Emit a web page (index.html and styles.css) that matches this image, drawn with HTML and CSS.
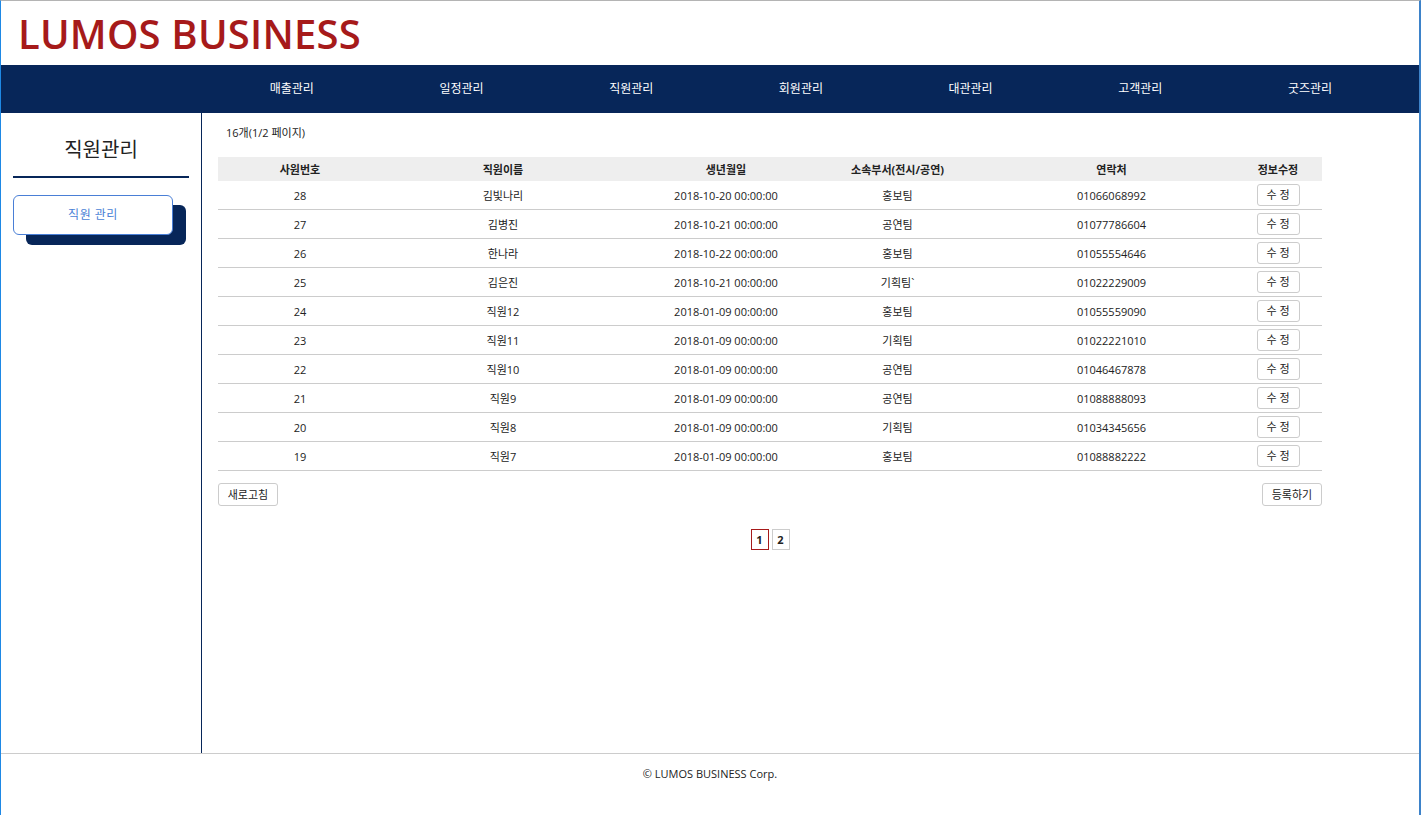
FILE: index.html
```html
<!DOCTYPE html>
<html lang="ko">
<head>
<meta charset="utf-8">
<title>LUMOS BUSINESS - 직원관리</title>
<link rel="stylesheet" href="styles.css">
</head>
<body>
<div class="page">
  <header class="header">
    <h1 class="logo">LUMOS BUSINESS</h1>
  </header>
  <nav class="nav">
    <ul class="nav-list">
      <li>매출관리</li>
      <li>일정관리</li>
      <li>직원관리</li>
      <li>회원관리</li>
      <li>대관관리</li>
      <li>고객관리</li>
      <li>굿즈관리</li>
    </ul>
  </nav>
  <div class="body">
    <aside class="side">
      <h2 class="side-title">직원관리</h2>
      <div class="side-btn">직원 관리</div>
    </aside>
    <main class="main">
      <p class="count">16개(1/2 페이지)</p>
      <table class="tbl">
        <thead>
          <tr><th class="c1">사원번호</th><th class="c2">직원이름</th><th class="c3">생년월일</th><th class="c4">소속부서(전시/공연)</th><th class="c5">연락처</th><th class="c6">정보수정</th></tr>
        </thead>
        <tbody>
          <tr><td>28</td><td>김빛나리</td><td>2018-10-20 00:00:00</td><td>홍보팀</td><td class="c5">01066068992</td><td><span class="edit">수 정</span></td></tr>
          <tr><td>27</td><td>김병진</td><td>2018-10-21 00:00:00</td><td>공연팀</td><td class="c5">01077786604</td><td><span class="edit">수 정</span></td></tr>
          <tr><td>26</td><td>한나라</td><td>2018-10-22 00:00:00</td><td>홍보팀</td><td class="c5">01055554646</td><td><span class="edit">수 정</span></td></tr>
          <tr><td>25</td><td>김은진</td><td>2018-10-21 00:00:00</td><td>기획팀`</td><td class="c5">01022229009</td><td><span class="edit">수 정</span></td></tr>
          <tr><td>24</td><td>직원12</td><td>2018-01-09 00:00:00</td><td>홍보팀</td><td class="c5">01055559090</td><td><span class="edit">수 정</span></td></tr>
          <tr><td>23</td><td>직원11</td><td>2018-01-09 00:00:00</td><td>기획팀</td><td class="c5">01022221010</td><td><span class="edit">수 정</span></td></tr>
          <tr><td>22</td><td>직원10</td><td>2018-01-09 00:00:00</td><td>공연팀</td><td class="c5">01046467878</td><td><span class="edit">수 정</span></td></tr>
          <tr><td>21</td><td>직원9</td><td>2018-01-09 00:00:00</td><td>공연팀</td><td class="c5">01088888093</td><td><span class="edit">수 정</span></td></tr>
          <tr><td>20</td><td>직원8</td><td>2018-01-09 00:00:00</td><td>기획팀</td><td class="c5">01034345656</td><td><span class="edit">수 정</span></td></tr>
          <tr><td>19</td><td>직원7</td><td>2018-01-09 00:00:00</td><td>홍보팀</td><td class="c5">01088882222</td><td><span class="edit">수 정</span></td></tr>
        </tbody>
      </table>
      <div class="actions">
        <span class="btn">새로고침</span>
        <span class="btn">등록하기</span>
      </div>
      <div class="pager">
        <span class="pg active">1</span>
        <span class="pg">2</span>
      </div>
    </main>
  </div>
  <footer class="footer">© LUMOS BUSINESS Corp.</footer>
</div>
</body>
</html>
```
FILE: styles.css
```css
html, body {
  margin: 0;
  padding: 0;
  background: #fff;
}
body {
  font-family: "Open Sans", "Noto Sans CJK KR", sans-serif;
  color: #222;
  font-size: 11px;
}
.page {
  height: 815px;
  box-sizing: border-box;
  border-top: 1px solid #b4b4b4;
  border-left: 1px solid #1e88e5;
  border-right: 2px solid #3d82c9;
  display: flex;
  flex-direction: column;
}
.header {
  height: 64px;
  display: flex;
  align-items: center;
  padding-left: 17px;
}
.logo {
  margin: 0;
  color: #a61a1a;
  font-family: "Open Sans", "Noto Sans CJK KR", sans-serif;
  font-weight: 600;
  font-size: 40px;
  letter-spacing: 0.2px;
  line-height: 1;
  padding-top: 2px;
}
.nav {
  height: 48px;
  background: #072659;
}
.nav-list {
  list-style: none;
  margin: 0;
  padding: 0 0 0 206px;
  display: flex;
  height: 100%;
}
.nav-list li {
  width: 169.7px;
  text-align: center;
  color: #fff;
  font-size: 12px;
  line-height: 48px;
}
.body {
  display: flex;
  height: 640px;
}
.side {
  border-right: 1px solid #072659;
  padding: 0 12px;
  box-sizing: border-box;
  width: 201px;
}
.side-title {
  margin: 0;
  padding-top: 22px;
  height: 41px;
  border-bottom: 2px solid #072659;
  text-align: center;
  font-weight: 400;
  font-size: 20px;
  line-height: 30px;
  color: #222;
}
.side-btn {
  margin-top: 17px;
  width: 160px;
  height: 40px;
  box-sizing: border-box;
  border: 1px solid #4a7fd6;
  border-radius: 6px;
  background: #fff;
  box-shadow: 13px 10px 0 #072659;
  color: #4a7fd6;
  text-align: center;
  line-height: 38px;
  font-size: 12px;
  letter-spacing: 0.5px;
}
.main {
  flex: 1;
  padding-left: 16px;
}
.count {
  margin: 11px 0 0 8px;
  font-size: 11px;
  line-height: 18px;
}
.tbl {
  margin-top: 15px;
  width: 1104px;
  border-collapse: collapse;
  table-layout: fixed;
}
.tbl th {
  background: #eee;
  height: 24px;
  font-weight: 700;
  font-size: 11px;
  padding: 0;
  text-align: center;
}
.tbl td {
  height: 28px;
  border-bottom: 1px solid #ccc;
  padding: 0;
  text-align: center;
  font-size: 11px;
}
.c1 { width: 164px; }
.c2 { width: 242px; }
.c3 { width: 204px; }
.c4 { width: 139px; }
.c5 { width: 245px; }
.c6 { width: 88px; }
.tbl th.c5, .tbl td.c5 { padding-left: 22px; }
.edit {
  display: inline-block;
  width: 43px;
  height: 22px;
  box-sizing: border-box;
  border: 1px solid #ccc;
  border-radius: 3px;
  line-height: 20px;
  font-size: 11px;
  vertical-align: middle;
}
.actions {
  width: 1104px;
  display: flex;
  justify-content: space-between;
  margin-top: 12px;
}
.btn {
  display: inline-block;
  width: 60px;
  height: 23px;
  box-sizing: border-box;
  border: 1px solid #ccc;
  border-radius: 3px;
  text-align: center;
  line-height: 21px;
  font-size: 11px;
}
.pager {
  width: 1104px;
  display: flex;
  justify-content: center;
  gap: 3px;
  margin-top: 23px;
}
.pg {
  display: inline-block;
  width: 18px;
  height: 21px;
  box-sizing: border-box;
  border: 1px solid #ccc;
  text-align: center;
  line-height: 19px;
  font-weight: 700;
  font-size: 11px;
}
.pg.active {
  border-color: #a61a1a;
}
.footer {
  border-top: 1px solid #ccc;
  flex: 1;
  text-align: center;
  padding-top: 12px;
  font-size: 11px;
  line-height: 16px;
}
```
